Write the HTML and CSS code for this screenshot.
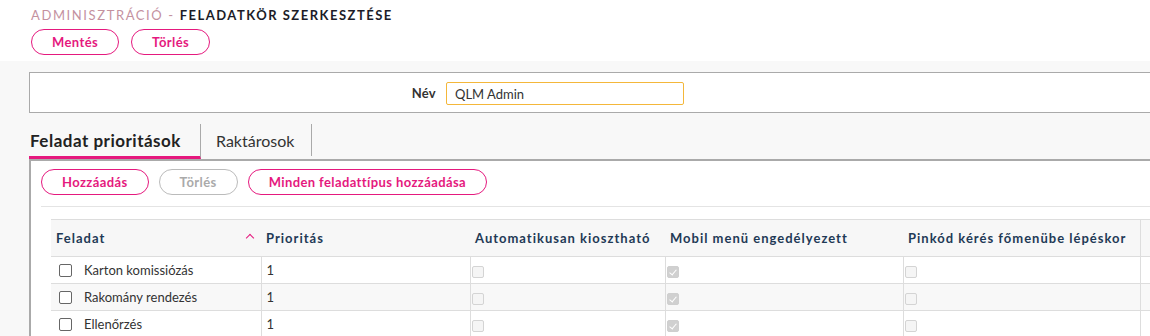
FILE: index.html
```html
<!DOCTYPE html>
<html lang="hu">
<head>
    <meta charset="UTF-8">
    <title>Feladatkör szerkesztése</title>
    <link rel="stylesheet" href="styles.css">
</head>
<body>
    <header class="page-head">
        <h1 class="title"><span class="crumb">Adminisztráció -</span> <span class="current">Feladatkör szerkesztése</span></h1>
        <div class="actions">
            <button class="btn">Mentés</button>
            <button class="btn">Törlés</button>
        </div>
    </header>

    <main class="content">
        <div class="name-box">
            <label for="name">Név</label>
            <input type="text" id="name" value="QLM Admin">
        </div>

        <nav class="tabs">
            <a class="tab active">Feladat prioritások</a>
            <a class="tab">Raktárosok</a>
        </nav>

        <section class="panel">
            <div class="toolbar">
                <button class="btn">Hozzáadás</button>
                <button class="btn disabled">Törlés</button>
                <button class="btn">Minden feladattípus hozzáadása</button>
            </div>

            <table class="grid">
                <colgroup>
                    <col style="width:210px">
                    <col style="width:209px">
                    <col style="width:195px">
                    <col style="width:238px">
                    <col style="width:237px">
                    <col style="width:200px">
                </colgroup>
                <thead>
                    <tr>
                        <th class="sorted">Feladat <span class="caret"></span></th>
                        <th>Prioritás</th>
                        <th>Automatikusan kiosztható</th>
                        <th>Mobil menü engedélyezett</th>
                        <th class="last">Pinkód kérés főmenübe lépéskor</th>
                        <th></th>
                    </tr>
                </thead>
                <tbody>
                    <tr>
                        <td class="name"><span class="check"></span>Karton komissiózás</td>
                        <td>1</td>
                        <td><span class="flag"></span></td>
                        <td><span class="flag on"></span></td>
                        <td><span class="flag"></span></td>
                        <td></td>
                    </tr>
                    <tr class="alt">
                        <td class="name"><span class="check"></span>Rakomány rendezés</td>
                        <td>1</td>
                        <td><span class="flag"></span></td>
                        <td><span class="flag on"></span></td>
                        <td><span class="flag"></span></td>
                        <td></td>
                    </tr>
                    <tr>
                        <td class="name"><span class="check"></span>Ellenőrzés</td>
                        <td>1</td>
                        <td><span class="flag"></span></td>
                        <td><span class="flag on"></span></td>
                        <td><span class="flag"></span></td>
                        <td></td>
                    </tr>
                </tbody>
            </table>
        </section>
    </main>
</body>
</html>
```

FILE: styles.css
```css
html, body {
    margin: 0;
    overflow: hidden;
}

body {
    font-family: Lato, "Noto Sans", sans-serif;
    font-size: 13px;
    color: #333;
    background-color: #fff;
}

.page-head {
    height: 61px;
    padding: 0 0 0 31px;
    box-sizing: border-box;
}

.title {
    margin: 0;
    padding-top: 7px;
    font-size: 13px;
    line-height: 16px;
    font-weight: normal;
    letter-spacing: 1.6px;
    text-transform: uppercase;
}

.title .crumb {
    color: #c4919f;
}

.title .current {
    color: #1c1c28;
    font-weight: bold;
    letter-spacing: 1.5px;
}

.actions {
    display: flex;
    gap: 12px;
    margin-top: 6px;
}

.btn {
    height: 26px;
    padding: 0 20px;
    border: 1px solid #e5197e;
    border-radius: 14px;
    background: #fff;
    color: #e5197e;
    font-family: inherit;
    font-size: 13px;
    font-weight: bold;
    letter-spacing: 0.4px;
}

.btn.disabled {
    border-color: #bbb;
    color: #aaa;
}

.content {
    width: 1300px;
    background-color: #f8f8f8;
    padding: 11px 0 0 29px;
    height: 275px;
}

.name-box {
    display: flex;
    align-items: center;
    height: 39px;
    background: #fff;
    border: 1px solid #aaa;
    border-right: none;
}

.name-box label {
    width: 406px;
    text-align: right;
    font-weight: bold;
    letter-spacing: 0.3px;
    color: #333;
}

.name-box input {
    margin: 2px 0 0 10px;
    width: 238px;
    height: 23px;
    box-sizing: border-box;
    border: 1px solid #f4b73a;
    border-radius: 2px;
    outline: none;
    padding: 0 8px;
    font-family: inherit;
    font-size: 13px;
    color: #333;
}

.tabs {
    display: flex;
    margin-top: 11px;
    height: 35px;
}

.tab {
    display: flex;
    align-items: center;
    height: 32px;
    padding: 0 15px;
    font-size: 16px;
    color: #333;
    border-right: 1px solid #aaa;
    margin-bottom: 3px;
}

.tab:not(.active) {
    width: 80px;
}

.tab.active {
    width: 170px;
    padding: 0 0 0 1px;
    font-size: 17px;
    letter-spacing: 0.5px;
    font-weight: bold;
    color: #222;
    margin-bottom: 0;
    border-bottom: 3px solid #e5197e;
}

.panel {
    background: #fff;
    border-top: 2px solid #aaa;
    border-left: 2px solid #aaa;
    padding: 8px 0 0 10px;
    height: 200px;
}

.toolbar {
    display: flex;
    gap: 10px;
    padding-bottom: 11px;
    border-bottom: 1px solid #e4e4e4;
}

.grid {
    margin: 12px 0 0 10px;
    border-collapse: collapse;
    table-layout: fixed;
    width: 1289px;
}

.grid th {
    height: 36px;
    background: #f7f7f7;
    border-top: 1px solid #ddd;
    border-bottom: 1px solid #ddd;
    text-align: left;
    padding: 0 5px;
    font-weight: bold;
    color: #1f3a56;
    letter-spacing: 1px;
}

.grid th.sorted {
    position: relative;
}

.caret {
    position: absolute;
    right: 8px;
    top: 15px;
    width: 5px;
    height: 5px;
    border-top: 1px solid #e5197e;
    border-left: 1px solid #e5197e;
    transform: rotate(45deg);
}

.grid th.last {
    border-right: 1px solid #ddd;
}

.grid td {
    height: 26px;
    padding: 0 1px;
    border-bottom: 1px solid #ddd;
    border-left: 1px solid #ddd;
    vertical-align: middle;
}

.grid td:nth-child(2) {
    padding-left: 5px;
}

.grid td.name {
    border-left: none;
    padding-left: 8px;
}

.grid tr.alt td {
    background: #f8f8f8;
}

.check {
    display: inline-block;
    width: 13px;
    height: 13px;
    box-sizing: border-box;
    border: 1px solid #666;
    border-radius: 2px;
    background: #fff;
    vertical-align: -2px;
    margin-right: 12px;
}

.flag {
    display: inline-block;
    width: 12px;
    height: 12px;
    box-sizing: border-box;
    border: 1px solid #d4d4d4;
    border-radius: 2px;
    background: #f5f5f5;
    vertical-align: middle;
    position: relative;
}

.flag.on {
    background: #d0d0d0;
    border-color: #cfcfcf;
}

.flag.on::after {
    content: "";
    position: absolute;
    left: 3px;
    top: 1px;
    width: 3px;
    height: 6px;
    border-right: 1.5px solid #fff;
    border-bottom: 1.5px solid #fff;
    transform: rotate(40deg);
}
```
